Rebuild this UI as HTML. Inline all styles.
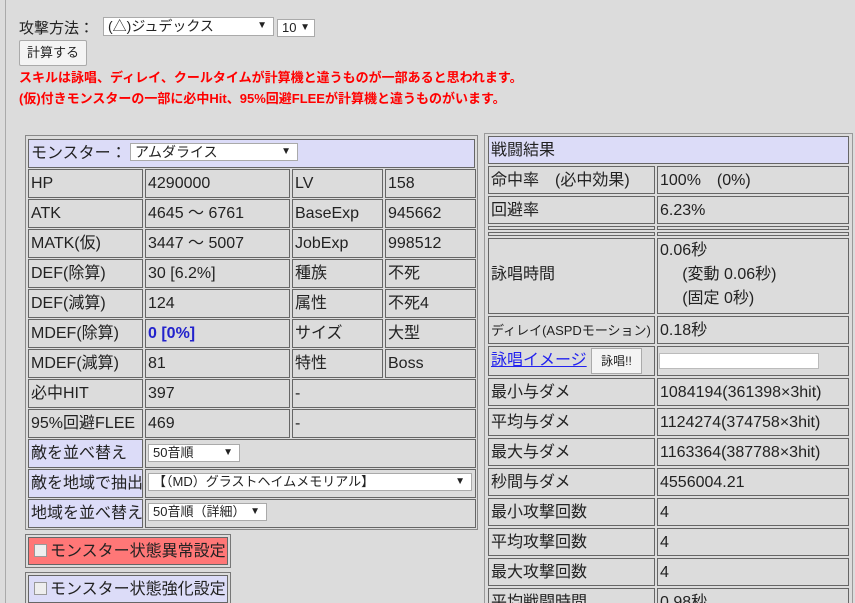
<!DOCTYPE html>
<html><head><meta charset="utf-8"><style>
html{overflow:hidden;height:603px}
body{margin:0;width:855px;height:603px;background:#dcdcdc;position:relative;overflow:hidden;font-family:"Liberation Sans","Noto Sans CJK JP",sans-serif;color:#222;font-size:16px}
.a{position:absolute;box-sizing:border-box}
.c{position:absolute;box-sizing:border-box;border:1px solid #666;padding-left:2px;line-height:28px;white-space:nowrap;overflow:hidden}
.l{background:#dcdcf8}
.sel{position:absolute;box-sizing:border-box;background:#fff;border:1px solid #aaa;font-size:13px;line-height:16px;padding-left:4px;white-space:nowrap}
.sel b{position:absolute;right:6px;top:0;font-size:10px}
.red{color:#f00;font-weight:bold;font-size:13px;position:absolute;left:19px}
</style></head><body>
<div class="a" style="left:5px;top:0;width:1px;height:603px;background:#aaa"></div>
<div class="a" style="left:19px;top:17px;font-size:15px">攻撃方法：</div>
<div class="sel" style="left:103px;top:17px;width:171px;height:19px;font-size:14px">(△)ジュデックス<b>▼</b></div>
<div class="sel" style="left:277px;top:19px;width:38px;height:18px">10<b style="right:4px">▼</b></div>
<div class="a" style="left:19px;top:40px;width:68px;height:26px;border:1px solid #aaa;background:#f4f4f4;border-radius:2px;font-size:13px;line-height:24px;text-align:center">計算する</div>
<div class="red" style="top:67px">スキルは詠唱、ディレイ、クールタイムが計算機と違うものが一部あると思われます。</div>
<div class="red" style="top:88px">(仮)付きモンスターの一部に必中Hit、95%回避FLEEが計算機と違うものがいます。</div>

<div class="a" style="left:25px;top:135px;width:453px;height:395px;border:1px solid #888"></div>
<div class="c l" style="left:28px;top:139px;width:447px;height:29px">モンスター：</div>
<div class="sel" style="left:130px;top:143px;width:168px;height:18px;font-size:14px">アムダライス<b>▼</b></div>

<div class="c" style="left:28px;top:169px;width:115px;height:29px">HP</div><div class="c" style="left:145px;top:169px;width:145px;height:29px">4290000</div><div class="c" style="left:292px;top:169px;width:91px;height:29px">LV</div><div class="c" style="left:385px;top:169px;width:91px;height:29px">158</div>
<div class="c" style="left:28px;top:199px;width:115px;height:29px">ATK</div><div class="c" style="left:145px;top:199px;width:145px;height:29px">4645 ～ 6761</div><div class="c" style="left:292px;top:199px;width:91px;height:29px">BaseExp</div><div class="c" style="left:385px;top:199px;width:91px;height:29px">945662</div>
<div class="c" style="left:28px;top:229px;width:115px;height:29px">MATK(仮)</div><div class="c" style="left:145px;top:229px;width:145px;height:29px">3447 ～ 5007</div><div class="c" style="left:292px;top:229px;width:91px;height:29px">JobExp</div><div class="c" style="left:385px;top:229px;width:91px;height:29px">998512</div>
<div class="c" style="left:28px;top:259px;width:115px;height:29px">DEF(除算)</div><div class="c" style="left:145px;top:259px;width:145px;height:29px">30 [6.2%]</div><div class="c" style="left:292px;top:259px;width:91px;height:29px">種族</div><div class="c" style="left:385px;top:259px;width:91px;height:29px">不死</div>
<div class="c" style="left:28px;top:289px;width:115px;height:29px">DEF(減算)</div><div class="c" style="left:145px;top:289px;width:145px;height:29px">124</div><div class="c" style="left:292px;top:289px;width:91px;height:29px">属性</div><div class="c" style="left:385px;top:289px;width:91px;height:29px">不死4</div>
<div class="c" style="left:28px;top:319px;width:115px;height:29px">MDEF(除算)</div><div class="c" style="left:145px;top:319px;width:145px;height:29px;color:#22c;font-weight:bold">0 [0%]</div><div class="c" style="left:292px;top:319px;width:91px;height:29px">サイズ</div><div class="c" style="left:385px;top:319px;width:91px;height:29px">大型</div>
<div class="c" style="left:28px;top:349px;width:115px;height:29px">MDEF(減算)</div><div class="c" style="left:145px;top:349px;width:145px;height:29px">81</div><div class="c" style="left:292px;top:349px;width:91px;height:29px">特性</div><div class="c" style="left:385px;top:349px;width:91px;height:29px">Boss</div>
<div class="c" style="left:28px;top:379px;width:115px;height:29px">必中HIT</div><div class="c" style="left:145px;top:379px;width:145px;height:29px">397</div><div class="c" style="left:292px;top:379px;width:184px;height:29px">-</div>
<div class="c" style="left:28px;top:409px;width:115px;height:29px">95%回避FLEE</div><div class="c" style="left:145px;top:409px;width:145px;height:29px">469</div><div class="c" style="left:292px;top:409px;width:184px;height:29px">-</div>
<div class="c l" style="left:28px;top:439px;width:115px;height:29px">敵を並べ替え</div><div class="c" style="left:145px;top:439px;width:331px;height:29px"></div>
<div class="sel" style="left:148px;top:444px;width:92px;height:18px">50音順<b>▼</b></div>
<div class="c l" style="left:28px;top:469px;width:115px;height:29px">敵を地域で抽出</div><div class="c" style="left:145px;top:469px;width:331px;height:29px"></div>
<div class="sel" style="left:148px;top:473px;width:324px;height:18px">【（MD）グラストヘイムメモリアル】<b>▼</b></div>
<div class="c l" style="left:28px;top:499px;width:115px;height:29px">地域を並べ替え</div><div class="c" style="left:145px;top:499px;width:331px;height:29px"></div>
<div class="sel" style="left:148px;top:503px;width:119px;height:18px">50音順（詳細）<b>▼</b></div>

<div class="a" style="left:25px;top:534px;width:206px;height:34px;border:1px solid #777"></div>
<div class="c" style="left:28px;top:537px;width:200px;height:28px;background:#f77;padding-left:5px;line-height:27px">
<span style="display:inline-block;width:11px;height:11px;border:1px solid #999;background:#eee;vertical-align:-1px;margin-right:3px"></span>モンスター状態異常設定</div>
<div class="a" style="left:25px;top:572px;width:206px;height:34px;border:1px solid #777"></div>
<div class="c l" style="left:28px;top:575px;width:200px;height:28px;padding-left:5px;line-height:27px">
<span style="display:inline-block;width:11px;height:11px;border:1px solid #999;background:#eee;vertical-align:-1px;margin-right:3px"></span>モンスター状態強化設定</div>

<div class="a" style="left:484px;top:133px;width:369px;height:480px;border:1px solid #999"></div>
<div class="c l" style="left:488px;top:136px;width:361px;height:28px;line-height:27px">戦闘結果</div>
<div class="c" style="left:488px;top:166px;width:167px;height:28px;line-height:27px">命中率　(必中効果)</div><div class="c" style="left:657px;top:166px;width:192px;height:28px;line-height:27px">100%　(0%)</div>
<div class="c" style="left:488px;top:196px;width:167px;height:28px;line-height:27px">回避率</div><div class="c" style="left:657px;top:196px;width:192px;height:28px;line-height:27px">6.23%</div>
<div class="c" style="left:488px;top:226px;width:167px;height:4px"></div><div class="c" style="left:657px;top:226px;width:192px;height:4px"></div>
<div class="c" style="left:488px;top:232px;width:167px;height:4px"></div><div class="c" style="left:657px;top:232px;width:192px;height:4px"></div>
<div class="c" style="left:488px;top:238px;width:167px;height:76px;line-height:72px">詠唱時間</div>
<div class="c" style="left:657px;top:238px;width:192px;height:76px;line-height:24px">0.06秒<br>&nbsp;&nbsp;&nbsp;&nbsp;&nbsp;(変動 0.06秒)<br>&nbsp;&nbsp;&nbsp;&nbsp;&nbsp;(固定 0秒)</div>
<div class="c" style="left:488px;top:316px;width:167px;height:28px;font-size:13px">ディレイ(ASPDモーション)</div><div class="c" style="left:657px;top:316px;width:192px;height:28px;line-height:27px">0.18秒</div>
<div class="c" style="left:488px;top:346px;width:167px;height:30px"><span style="color:#22e;text-decoration:underline">詠唱イメージ</span></div>
<div class="a" style="left:591px;top:348px;width:51px;height:26px;border:1px solid #aaa;background:#f4f4f4;font-size:12px;line-height:24px;text-align:center">詠唱!!</div>
<div class="c" style="left:657px;top:346px;width:192px;height:30px"></div>
<div class="a" style="left:659px;top:353px;width:160px;height:16px;border:1px solid #bbb;background:#fff"></div>
<div class="c" style="left:488px;top:378px;width:167px;height:28px;line-height:27px">最小与ダメ</div><div class="c" style="left:657px;top:378px;width:192px;height:28px;line-height:27px">1084194(361398×3hit)</div>
<div class="c" style="left:488px;top:408px;width:167px;height:28px;line-height:27px">平均与ダメ</div><div class="c" style="left:657px;top:408px;width:192px;height:28px;line-height:27px">1124274(374758×3hit)</div>
<div class="c" style="left:488px;top:438px;width:167px;height:28px;line-height:27px">最大与ダメ</div><div class="c" style="left:657px;top:438px;width:192px;height:28px;line-height:27px">1163364(387788×3hit)</div>
<div class="c" style="left:488px;top:468px;width:167px;height:28px;line-height:27px">秒間与ダメ</div><div class="c" style="left:657px;top:468px;width:192px;height:28px;line-height:27px">4556004.21</div>
<div class="c" style="left:488px;top:498px;width:167px;height:28px;line-height:27px">最小攻撃回数</div><div class="c" style="left:657px;top:498px;width:192px;height:28px;line-height:27px">4</div>
<div class="c" style="left:488px;top:528px;width:167px;height:28px;line-height:27px">平均攻撃回数</div><div class="c" style="left:657px;top:528px;width:192px;height:28px;line-height:27px">4</div>
<div class="c" style="left:488px;top:558px;width:167px;height:28px;line-height:27px">最大攻撃回数</div><div class="c" style="left:657px;top:558px;width:192px;height:28px;line-height:27px">4</div>
<div class="c" style="left:488px;top:588px;width:167px;height:28px;line-height:27px">平均戦闘時間</div><div class="c" style="left:657px;top:588px;width:192px;height:28px;line-height:27px">0.98秒</div>
</body></html>
